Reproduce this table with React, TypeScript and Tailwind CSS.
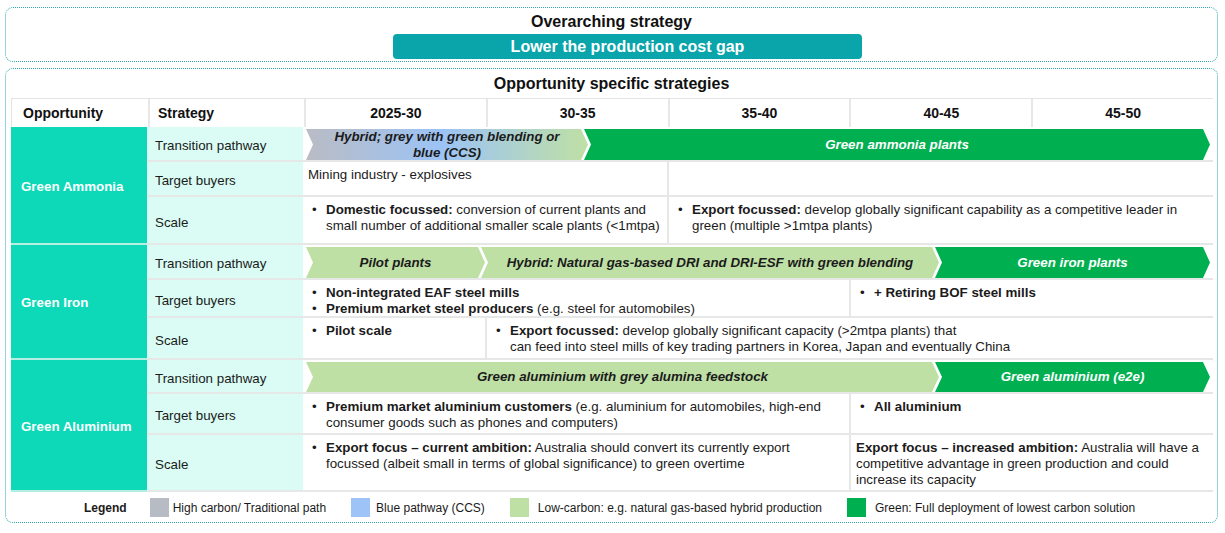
import React from 'react';
import clsx from 'clsx';

const chevron =
  '[clip-path:polygon(0_0,calc(100%_-_7px)_0,100%_50%,calc(100%_-_7px)_100%,0_100%,7px_50%)]';

type ArrowKind = 'hybrid' | 'light' | 'green';

interface ArrowProps {
  kind: ArrowKind;
  width?: string;
  first?: boolean;
  children: React.ReactNode;
}

function Arrow({ kind, width, first, children }: ArrowProps) {
  return (
    <div
      className={clsx(
        'h-full flex items-center justify-center text-center text-[13.33px] leading-4 font-bold italic px-4',
        chevron,
        kind === 'hybrid' && 'bg-[linear-gradient(to_right,#b9bcc4_0%,#9cc3f6_48%,#bfe0a5_100%)] text-[#1b1b1b]',
        kind === 'light' && 'bg-[#bfe0a5] text-[#1b1b1b]',
        kind === 'green' && 'bg-[#00b050] text-white',
        !first && '-ml-[4px]',
        width ? `shrink-0 ${width}` : 'flex-1'
      )}
    >
      {children}
    </div>
  );
}

function Bullet({ children }: { children: React.ReactNode }) {
  return (
    <div className="flex">
      <span className="w-[18px] shrink-0 pl-[4px]">•</span>
      <span>{children}</span>
    </div>
  );
}

function Cell({ className, children }: { className?: string; children?: React.ReactNode }) {
  return (
    <div className={clsx('h-full pl-[5px] pr-[3px] pt-[5px] text-[13.33px] leading-4 text-[#1b1b1b]', className)}>
      {children}
    </div>
  );
}

function Row({ label, height, children }: { label: string; height: string; children: React.ReactNode }) {
  return (
    <div className={clsx('flex border-b-2 border-[#e6e8e7]', height)}>
      <div className="w-[156px] shrink-0 bg-[#dafcf4] flex items-center pl-[8px] pt-[5px] text-[13.33px] text-[#1b1b1b]">
        {label}
      </div>
      <div className="flex-1 flex bg-white">{children}</div>
    </div>
  );
}

function Group({ name, children }: { name: string; children: React.ReactNode }) {
  return (
    <div className="flex">
      <div className="w-[136px] shrink-0 bg-[#0dd9b8] border-b-2 border-[#b4efe2] flex items-center pl-[10px] pt-[3px] text-[13.33px] font-bold text-white">
        {name}
      </div>
      <div className="flex-1 flex flex-col">{children}</div>
    </div>
  );
}

function Pathway({ children }: { children: React.ReactNode }) {
  return <div className="flex-1 flex px-[3px] pt-[2px]">{children}</div>;
}

const years = ['2025-30', '30-35', '35-40', '40-45', '45-50'];

const legend = [
  { color: 'bg-[#b7bbc4]', label: 'High carbon/ Traditional path', gap: 'ml-[4px]' },
  { color: 'bg-[#9dc3f7]', label: 'Blue pathway (CCS)', gap: 'ml-[6px]' },
  { color: 'bg-[#bfe0a5]', label: 'Low-carbon: e.g. natural gas-based hybrid production', gap: 'ml-[9px]' },
  { color: 'bg-[#00b050]', label: 'Green: Full deployment of lowest carbon solution', gap: 'ml-[9px]' },
];

export default function App() {
  return (
    <div className="w-[1225px] h-[533px] bg-white font-['Liberation_Sans',Arial,sans-serif] text-[#111] pt-[7px] pl-[5px]">
      {/* Overarching */}
      <div className="w-[1213px] border border-dotted border-[#2fa9b1] rounded-lg flex flex-col items-center pt-[4px] pb-[2px]">
        <div className="text-[16px] leading-5 font-bold">Overarching strategy</div>
        <div className="mt-[2px] ml-[32px] w-[469px] h-[25px] rounded-[4px] bg-[#0aa5aa] flex items-center justify-center text-[16px] font-bold text-white">
          Lower the production cost gap
        </div>
      </div>

      {/* Opportunity specific */}
      <div className="mt-[6px] w-[1213px] border border-dotted border-[#2fa9b1] rounded-lg pt-[5px] pb-[5px]">
        <div className="text-center text-[16px] leading-5 font-bold">Opportunity specific strategies</div>

        <div className="mt-[4px] ml-[5px] w-[1202px]">
          {/* Header */}
          <div className="flex h-[29px] border-t border-l border-[#e4e4e4] bg-white text-[14px] font-bold">
            <div className="w-[136px] shrink-0 flex items-center pl-[11px]">Opportunity</div>
            <div className="w-[156px] shrink-0 flex items-center pl-[8px] border-l-2 border-[#e6e8e7]">Strategy</div>
            {years.map((y) => (
              <div key={y} className="flex-1 flex items-center justify-center border-l-2 border-[#e6e8e7]">
                {y}
              </div>
            ))}
          </div>

          {/* Green Ammonia */}
          <Group name="Green Ammonia">
            <Row label="Transition pathway" height="h-[35px]">
              <Pathway>
                <Arrow kind="hybrid" width="w-[282px]" first>
                  Hybrid; grey with green blending or
                  <br />
                  blue (CCS)
                </Arrow>
                <Arrow kind="green">Green ammonia plants</Arrow>
              </Pathway>
            </Row>
            <Row label="Target buyers" height="h-[35px]">
              <Cell className="w-[364px]">Mining industry - explosives</Cell>
              <Cell className="flex-1 border-l-2 border-[#e6e8e7]" />
            </Row>
            <Row label="Scale" height="h-[48px]">
              <Cell className="w-[364px]">
                <Bullet>
                  <b>Domestic focussed:</b> conversion of current plants and
                  <br />
                  small number of additional smaller scale plants (&lt;1mtpa)
                </Bullet>
              </Cell>
              <Cell className="flex-1 border-l-2 border-[#e6e8e7]">
                <Bullet>
                  <b>Export focussed:</b> develop globally significant capability as a competitive leader in
                  <br />
                  green (multiple &gt;1mtpa plants)
                </Bullet>
              </Cell>
            </Row>
          </Group>

          {/* Green Iron */}
          <Group name="Green Iron">
            <Row label="Transition pathway" height="h-[35px]">
              <Pathway>
                <Arrow kind="light" width="w-[179px]" first>
                  Pilot plants
                </Arrow>
                <Arrow kind="light" width="w-[458px]">
                  Hybrid: Natural gas-based DRI and DRI-ESF with green blending
                </Arrow>
                <Arrow kind="green">Green iron plants</Arrow>
              </Pathway>
            </Row>
            <Row label="Target buyers" height="h-[38px]">
              <Cell className="w-[546px]">
                <Bullet>
                  <b>Non-integrated EAF steel mills</b>
                </Bullet>
                <Bullet>
                  <b>Premium market steel producers</b> (e.g. steel for automobiles)
                </Bullet>
              </Cell>
              <Cell className="flex-1 border-l-2 border-[#e6e8e7]">
                <Bullet>
                  <b>+ Retiring BOF steel mills</b>
                </Bullet>
              </Cell>
            </Row>
            <Row label="Scale" height="h-[42px]">
              <Cell className="w-[182px]">
                <Bullet>
                  <b>Pilot scale</b>
                </Bullet>
              </Cell>
              <Cell className="flex-1 border-l-2 border-[#e6e8e7]">
                <Bullet>
                  <b>Export focussed:</b> develop globally significant capacity (&gt;2mtpa plants) that
                  <br />
                  can feed into steel mills of key trading partners in Korea, Japan and eventually China
                </Bullet>
              </Cell>
            </Row>
          </Group>

          {/* Green Aluminium */}
          <Group name="Green Aluminium">
            <Row label="Transition pathway" height="h-[34px]">
              <Pathway>
                <Arrow kind="light" width="w-[633px]" first>
                  Green aluminium with grey alumina feedstock
                </Arrow>
                <Arrow kind="green">Green aluminium (e2e)</Arrow>
              </Pathway>
            </Row>
            <Row label="Target buyers" height="h-[41px]">
              <Cell className="w-[546px]">
                <Bullet>
                  <b>Premium market aluminium customers</b> (e.g. aluminium for automobiles, high-end
                  <br />
                  consumer goods such as phones and computers)
                </Bullet>
              </Cell>
              <Cell className="flex-1 border-l-2 border-[#e6e8e7]">
                <Bullet>
                  <b>All aluminium</b>
                </Bullet>
              </Cell>
            </Row>
            <Row label="Scale" height="h-[57px]">
              <Cell className="w-[546px]">
                <Bullet>
                  <b>Export focus – current ambition:</b> Australia should convert its currently export
                  <br />
                  focussed (albeit small in terms of global significance) to green overtime
                </Bullet>
              </Cell>
              <Cell className="flex-1 border-l-2 border-[#e6e8e7]">
                <b>Export focus – increased ambition:</b> Australia will have a
                <br />
                competitive advantage in green production and could
                <br />
                increase its capacity
              </Cell>
            </Row>
          </Group>

          {/* Legend */}
          <div className="flex items-center pt-[6px] pl-[73px] text-[12px] text-[#1b1b1b]">
            <span className="font-bold">Legend</span>
            {legend.map((item, i) => (
              <div key={item.label} className={clsx('flex items-center', i === 0 ? 'ml-[23px]' : 'ml-[25px]')}>
                <span className={clsx('w-[19px] h-[19px]', item.color)} />
                <span className={item.gap}>{item.label}</span>
              </div>
            ))}
          </div>
        </div>
      </div>
    </div>
  );
}
